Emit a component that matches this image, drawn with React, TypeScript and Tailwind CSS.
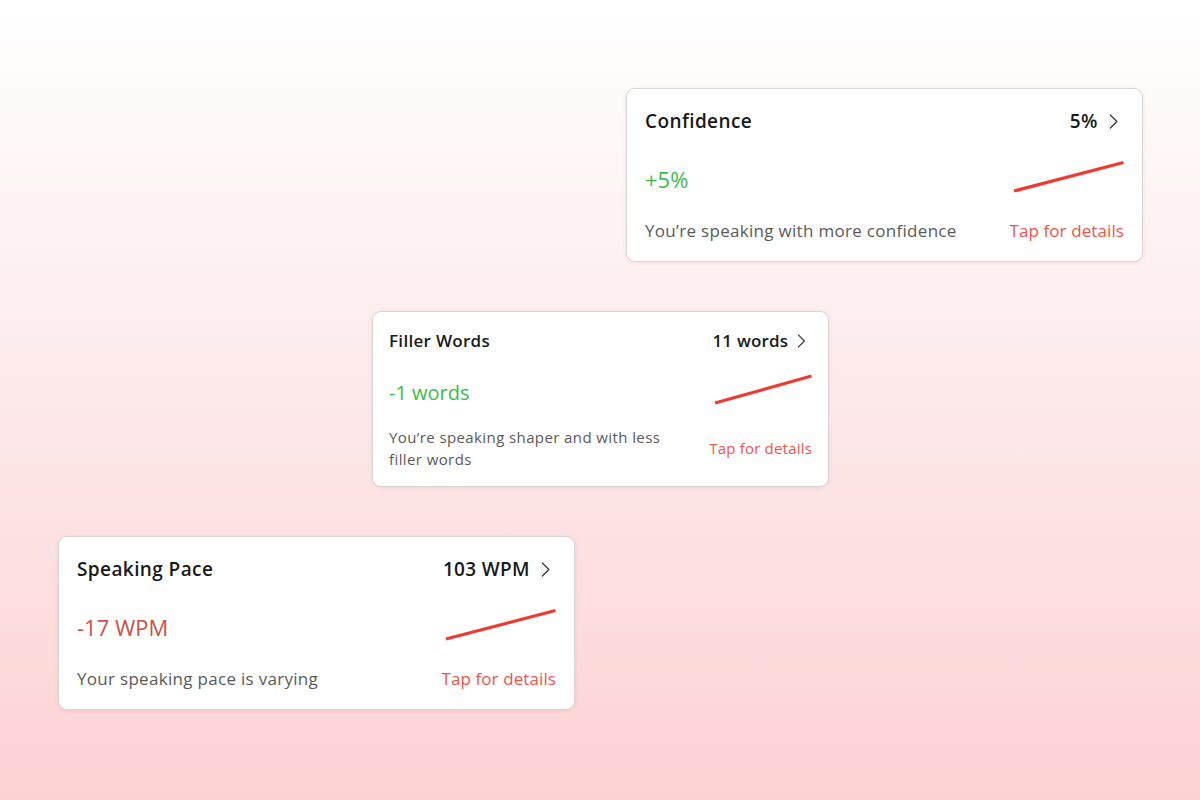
import React from 'react';

type Metric = {
  title: string;
  total: string;
  delta: string;
  deltaColor: string;
  note: string;
};

const Chevron: React.FC<{ h: number }> = ({ h }) => (
  <svg width={h * 0.62} height={h} viewBox="0 0 10 16" fill="none" className="shrink-0 mr-[6px]">
    <polyline points="1.5,1 8.5,8 1.5,15" stroke="#3a3a3a" strokeWidth={1.4} strokeLinecap="round" strokeLinejoin="round" />
  </svg>
);

const TrendLine: React.FC<{ w: number; top: number; bottom: number }> = ({ w, top, bottom }) => (
  <svg width={w} height={40} viewBox={`0 0 ${w} 40`} className="shrink-0">
    <line x1={1} y1={bottom} x2={w - 0.5} y2={top} stroke="#ee3b30" strokeWidth={3.2} strokeLinecap="butt" />
  </svg>
);

const BigCard: React.FC<{ m: Metric; className: string }> = ({ m, className }) => (
  <div className={`w-[517px] h-[174px] bg-white rounded-[9px] border border-[#dad4d4] shadow-[0_1px_4px_rgba(120,60,60,0.10)] px-[18px] pt-[17px] flex flex-col ${className}`}>
    <div className="h-[30px] flex items-center justify-between">
      <span className="text-[19px] font-semibold text-[#1a1a1a] tracking-[0.4px]">{m.title}</span>
      <span className="flex items-center gap-[11px] text-[19px] font-semibold text-[#1a1a1a] tracking-[0.3px]">
        {m.total}
        <Chevron h={15} />
      </span>
    </div>
    <div className="mt-[23px] h-[40px] flex items-center justify-between">
      <span className={`text-[22px] ${m.deltaColor}`}>{m.delta}</span>
      <TrendLine w={111} top={3.5} bottom={32} />
    </div>
    <div className="mt-[20px] h-[24px] flex items-center justify-between text-[17px] tracking-[0.3px]">
      <span className="text-[#5a5a5a]">{m.note}</span>
      <span className="text-[#f2524c] tracking-[0.1px]">Tap for details</span>
    </div>
  </div>
);

const App: React.FC = () => {
  const confidence: Metric = {
    title: 'Confidence',
    total: '5%',
    delta: '+5%',
    deltaColor: 'text-[#3dba4f]',
    note: 'You’re speaking with more confidence',
  };
  const pace: Metric = {
    title: 'Speaking Pace',
    total: '103 WPM',
    delta: '-17 WPM',
    deltaColor: 'text-[#c9524a]',
    note: 'Your speaking pace is varying',
  };

  return (
    <div
      className="w-[1200px] h-[800px] overflow-hidden bg-gradient-to-b from-[#ffffff] via-[#fde9ea] to-[#fdd2d3] flex flex-col pt-[88px]"
      style={{ fontFamily: '"Open Sans", "Noto Sans", sans-serif' }}
    >
      <BigCard m={confidence} className="ml-[626px]" />

      <div className="ml-[372px] mt-[49px] w-[457px] h-[176px] bg-white rounded-[9px] border border-[#dad4d4] shadow-[0_1px_4px_rgba(120,60,60,0.10)] px-[16px] pt-[16px] flex flex-col">
        <div className="h-[26px] flex items-center justify-between">
          <span className="text-[17px] font-semibold text-[#1a1a1a] tracking-[0.3px]">Filler Words</span>
          <span className="flex items-center gap-[9px] text-[17px] font-semibold text-[#1a1a1a] tracking-[0.2px]">
            11 words
            <Chevron h={14} />
          </span>
        </div>
        <div className="mt-[19px] h-[40px] flex items-center justify-between">
          <span className="text-[20px] text-[#3dba4f]">-1 words</span>
          <TrendLine w={98} top={3} bottom={30} />
        </div>
        <div className="mt-[13px] flex items-center justify-between text-[15px] leading-[22px] tracking-[0.4px]">
          <span className="w-[290px] text-[#5a5a5a]">You’re speaking shaper and with less filler words</span>
          <span className="text-[#f2524c] tracking-[0.2px]">Tap for details</span>
        </div>
      </div>

      <BigCard m={pace} className="ml-[58px] mt-[49px]" />
    </div>
  );
};

export default App;
